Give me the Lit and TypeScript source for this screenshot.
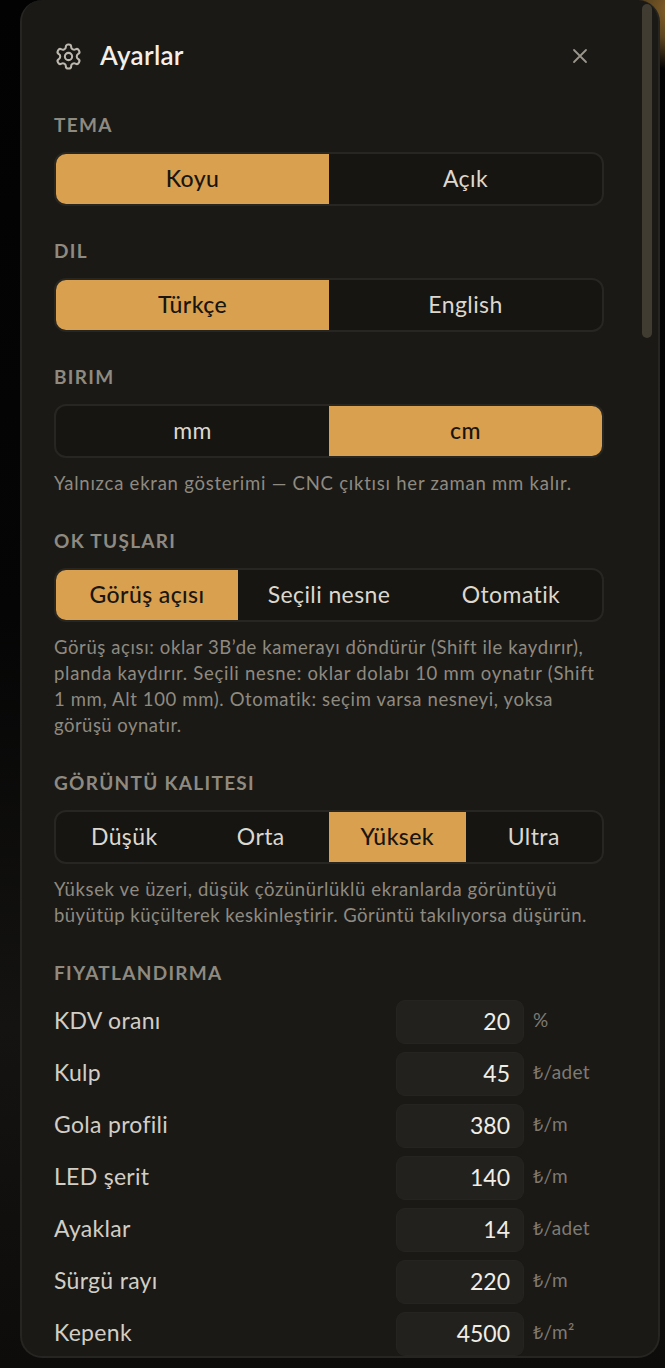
import { LitElement, html, css, svg } from "lit";
import { customElement } from "lit/decorators.js";

type Line = [string, number];
const seg = (opts: string[], active: number) => html`<div class="seg">${opts.map((o, i) => html`<button class="opt ${i === active ? "on" : ""}">${o}</button>`)}</div>`;
const hint = (lines: Line[]) => html`<div class="hint">${lines.map(([t, ls]) => html`<div style="letter-spacing:${ls}px">${t}</div>`)}</div>`;
const rows = [["KDV oranı","20","","%"],["Kulp","45","₺","/adet"],["Gola profili","380","₺","/m"],["LED şerit","140","₺","/m"],["Ayaklar","14","₺","/adet"],["Sürgü rayı","220","₺","/m"],["Kepenk","4500","₺","/m²"]];

@customElement("app-root")
export class AppRoot extends LitElement {
  static styles = css`
    :host { display: block; width: 665px; height: 1368px; overflow: hidden; position: relative;
      font-family: "Lato", "Noto Sans", sans-serif;
      background:
        radial-gradient(circle at 675px 10px, #8a6428 0, #5a4420 30px, transparent 60px),
        linear-gradient(180deg, #020203 0, #050505 45%, #141311 75%, #0d0c0b 100%); }
    .panel { box-sizing: border-box; margin-left: 20px; width: 640px; height: 1358px; background: #1a1916;
      border: 2px solid #262521; border-top: 0; border-radius: 22px; overflow: hidden; position: relative; padding: 34px 0 0 32px; }
    .track { position: absolute; left: 620px; top: 4px; width: 10px; height: 334px; border-radius: 5px; background: #403c32; }
    .head { display: flex; align-items: center; height: 44px; width: 550px; margin-bottom: 37px; }
    .gear { width: 29px; height: 29px; margin-left: 0; color: #bdb8ae; }
    .title { font-size: 26px; font-weight: 600; color: #f2efe8; margin: 0 0 3px 17px; flex: 1; letter-spacing: .3px; }
    .x { width: 24px; height: 24px; color: #9a968c; margin-right: 12px; }
    .sec { width: 550px; margin-bottom: 35px; }
    .lab { height: 20px; line-height: 20px; font-size: 19px; font-weight: 700; letter-spacing: 1.3px; color: #8f8a80; margin-bottom: 17px; }
    .seg { box-sizing: border-box; display: flex; height: 54px; border: 2px solid #272622; border-radius: 12px; overflow: hidden; background: #161512; }
    .opt { flex: 1; border: 0; padding: 0 0 3px; background: transparent; font: inherit; font-size: 23px; font-weight: 400; color: #dcd8cf; letter-spacing: .4px; }
    .opt.on { background: #d8a04f; color: #1a1510; font-weight: 500; }
    .hint { margin-top: 12px; font-size: 18.5px; line-height: 26px; color: #8f8a80; white-space: nowrap; }
    .rows { display: flex; flex-direction: column; gap: 8px; }
    .row { display: flex; align-items: center; height: 44px; }
    .name { width: 342px; font-size: 23px; color: #d2cec5; letter-spacing: .3px; margin-bottom: 4px; }
    .inp { box-sizing: border-box; width: 128px; height: 44px; background: #22211d; border: 1px solid #252420; border-radius: 9px; text-align: right; padding-right: 13px; font-size: 23px; line-height: 41px; color: #f0ede6; }
    .unit { margin: 0 0 4px 9px; font-size: 19px; color: #7f7b72; letter-spacing: .3px; }
    .lira { font-family: "Noto Sans", sans-serif; font-size: 18px; }
  `;
  render() {
    return html`<div class="panel">
      <div class="track"></div>
      <div class="head">
        <svg class="gear" viewBox="0 0 24 24" fill="none" stroke="currentColor" stroke-width="1.7" stroke-linecap="round" stroke-linejoin="round">${svg`<path d="M12.22 2h-.44a2 2 0 0 0-2 2v.18a2 2 0 0 1-1 1.73l-.43.25a2 2 0 0 1-2 0l-.15-.08a2 2 0 0 0-2.73.73l-.22.38a2 2 0 0 0 .73 2.73l.15.1a2 2 0 0 1 1 1.72v.51a2 2 0 0 1-1 1.74l-.15.09a2 2 0 0 0-.73 2.73l.22.38a2 2 0 0 0 2.73.73l.15-.08a2 2 0 0 1 2 0l.43.25a2 2 0 0 1 1 1.73V20a2 2 0 0 0 2 2h.44a2 2 0 0 0 2-2v-.18a2 2 0 0 1 1-1.73l.43-.25a2 2 0 0 1 2 0l.15.08a2 2 0 0 0 2.73-.73l.22-.39a2 2 0 0 0-.73-2.73l-.15-.08a2 2 0 0 1-1-1.74v-.5a2 2 0 0 1 1-1.74l.15-.09a2 2 0 0 0 .73-2.73l-.22-.38a2 2 0 0 0-2.73-.73l-.15.08a2 2 0 0 1-2 0l-.43-.25a2 2 0 0 1-1-1.73V4a2 2 0 0 0-2-2z"/><circle cx="12" cy="12" r="3"/>`}</svg>
        <div class="title">Ayarlar</div>
        <svg class="x" viewBox="0 0 24 24" fill="none" stroke="currentColor" stroke-width="1.8" stroke-linecap="round">${svg`<path d="M18 6 6 18M6 6l12 12"/>`}</svg>
      </div>
      <div class="sec"><div class="lab">TEMA</div>${seg(["Koyu","Açık"],0)}</div>
      <div class="sec"><div class="lab">DIL</div>${seg(["Türkçe","English"],0)}</div>
      <div class="sec"><div class="lab">BIRIM</div>${seg(["mm","cm"],1)}
        ${hint([["Yalnızca ekran gösterimi — CNC çıktısı her zaman mm kalır.", .76]])}</div>
      <div class="sec"><div class="lab">OK TUŞLARI</div>${seg(["Görüş açısı","Seçili nesne","Otomatik"],0)}
        ${hint([["Görüş açısı: oklar 3B’de kamerayı döndürür (Shift ile kaydırır),", .6],["planda kaydırır. Seçili nesne: oklar dolabı 10 mm oynatır (Shift", .71],["1 mm, Alt 100 mm). Otomatik: seçim varsa nesneyi, yoksa", .64],["görüşü oynatır.", .47]])}</div>
      <div class="sec"><div class="lab">GÖRÜNTÜ KALITESI</div>${seg(["Düşük","Orta","Yüksek","Ultra"],2)}
        ${hint([["Yüksek ve üzeri, düşük çözünürlüklü ekranlarda görüntüyü", .62],["büyütüp küçülterek keskinleştirir. Görüntü takılıyorsa düşürün.", .47]])}</div>
      <div class="sec"><div class="lab">FIYATLANDIRMA</div><div class="rows">
        ${rows.map(r => html`<div class="row"><div class="name">${r[0]}</div><div class="inp">${r[1]}</div><div class="unit"><span class="lira">${r[2]}</span>${r[3]}</div></div>`)}
      </div></div>
    </div>`;
  }
}
